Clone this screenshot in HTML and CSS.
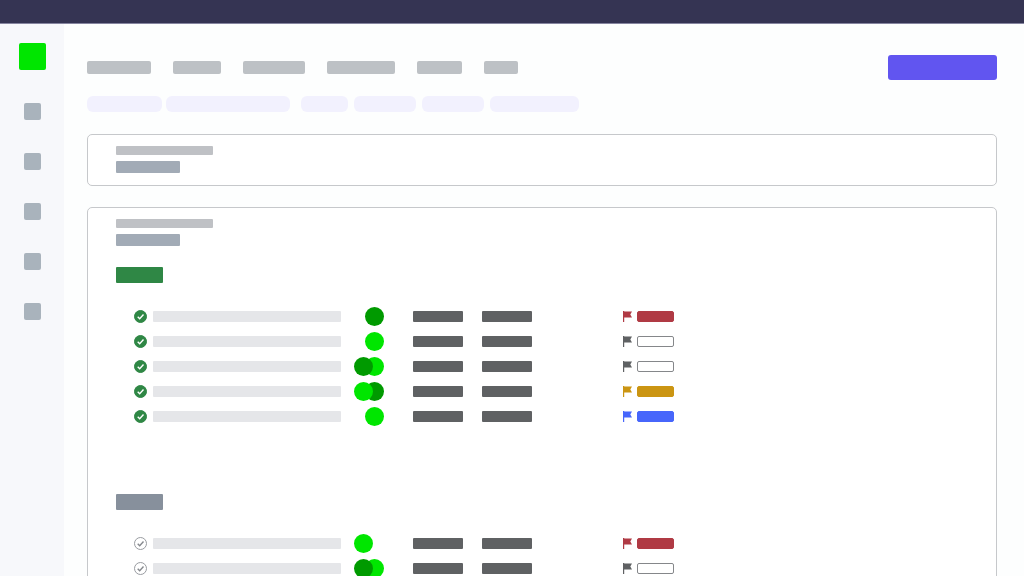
FILE: index.html
```
<!DOCTYPE html>
<html lang="en">
<head>
  <meta charset="UTF-8" />
  <meta name="viewport" content="width=device-width, initial-scale=1.0" />
  <title>Tasks</title>
  <link rel="stylesheet" href="styles.css">
</head>
<body>
  <!-- Shared icons -->
  <svg class="icon-defs" aria-hidden="true">
    <symbol id="flag" viewBox="0 0 9 11">
      <path d="M0 0h1.2v.6H9L7.3 3.5 9 6.4H1.2V11H0z" fill="currentColor" />
    </symbol>
    <symbol id="check" viewBox="0 0 13 13">
      <path d="M3.7 6.7l2 2 3.8-4.1" fill="none" stroke="currentColor" stroke-width="1.4" />
    </symbol>
  </svg>

  <header class="topbar"></header>

  <div class="layout">
    <nav class="sidebar" aria-label="Main">
      <a href="#" class="logo" aria-label="Home"></a>
      <a href="#" class="side-link" aria-label="Projects"></a>
      <a href="#" class="side-link" aria-label="Tasks"></a>
      <a href="#" class="side-link" aria-label="Calendar"></a>
      <a href="#" class="side-link" aria-label="Reports"></a>
      <a href="#" class="side-link" aria-label="Settings"></a>
    </nav>

    <main class="content">
      <div class="toolbar">
        <nav class="tabs" aria-label="Views">
          <a href="#" class="tab w-64" aria-label="Overview"></a>
          <a href="#" class="tab w-48" aria-label="List"></a>
          <a href="#" class="tab w-62" aria-label="Board"></a>
          <a href="#" class="tab w-68" aria-label="Timeline"></a>
          <a href="#" class="tab w-45" aria-label="Files"></a>
          <a href="#" class="tab w-34" aria-label="More"></a>
        </nav>
        <button type="button" class="btn-primary" aria-label="Add task"></button>
      </div>

      <div class="filters">
        <div class="filter-group tight">
          <button type="button" class="chip w-75" aria-label="Group"></button>
          <button type="button" class="chip w-124" aria-label="Subtasks"></button>
        </div>
        <div class="filter-group">
          <button type="button" class="chip w-47" aria-label="Sort"></button>
          <button type="button" class="chip w-62" aria-label="Filter"></button>
          <button type="button" class="chip w-62" aria-label="Assignee"></button>
          <button type="button" class="chip w-89" aria-label="Show closed"></button>
        </div>
      </div>

      <section class="card">
        <div class="crumb"></div>
        <div class="heading"></div>
      </section>

      <section class="card">
        <div class="crumb"></div>
        <div class="heading"></div>

        <div class="group">
          <div class="status done"></div>
          <table class="tasks">
            <tr>
              <td><label class="tick"><input type="checkbox" aria-label="Task 1" checked /><svg><use href="#check" /></svg></label></td>
              <td><div class="name"></div></td>
              <td><div class="people"><i class="dark"></i></div></td>
              <td><div class="date"></div></td>
              <td class="due"><div class="date"></div></td>
              <td><svg class="flag urgent"><use href="#flag" /></svg></td>
              <td><div class="tag urgent"></div></td>
            </tr>
            <tr>
              <td><label class="tick"><input type="checkbox" aria-label="Task 2" checked /><svg><use href="#check" /></svg></label></td>
              <td><div class="name"></div></td>
              <td><div class="people"><i></i></div></td>
              <td><div class="date"></div></td>
              <td class="due"><div class="date"></div></td>
              <td><svg class="flag"><use href="#flag" /></svg></td>
              <td><div class="tag"></div></td>
            </tr>
            <tr>
              <td><label class="tick"><input type="checkbox" aria-label="Task 3" checked /><svg><use href="#check" /></svg></label></td>
              <td><div class="name"></div></td>
              <td><div class="people"><i class="dark"></i><i></i></div></td>
              <td><div class="date"></div></td>
              <td class="due"><div class="date"></div></td>
              <td><svg class="flag"><use href="#flag" /></svg></td>
              <td><div class="tag"></div></td>
            </tr>
            <tr>
              <td><label class="tick"><input type="checkbox" aria-label="Task 4" checked /><svg><use href="#check" /></svg></label></td>
              <td><div class="name"></div></td>
              <td><div class="people"><i></i><i class="dark"></i></div></td>
              <td><div class="date"></div></td>
              <td class="due"><div class="date"></div></td>
              <td><svg class="flag high"><use href="#flag" /></svg></td>
              <td><div class="tag high"></div></td>
            </tr>
            <tr>
              <td><label class="tick"><input type="checkbox" aria-label="Task 5" checked /><svg><use href="#check" /></svg></label></td>
              <td><div class="name"></div></td>
              <td><div class="people"><i></i></div></td>
              <td><div class="date"></div></td>
              <td class="due"><div class="date"></div></td>
              <td><svg class="flag normal"><use href="#flag" /></svg></td>
              <td><div class="tag normal"></div></td>
            </tr>
          </table>
        </div>

        <div class="group">
          <div class="status"></div>
          <table class="tasks">
            <tr>
              <td><label class="tick"><input type="checkbox" aria-label="Task 6" /><svg><use href="#check" /></svg></label></td>
              <td><div class="name"></div></td>
              <td><div class="people start"><i></i></div></td>
              <td><div class="date"></div></td>
              <td class="due"><div class="date"></div></td>
              <td><svg class="flag urgent"><use href="#flag" /></svg></td>
              <td><div class="tag urgent"></div></td>
            </tr>
            <tr>
              <td><label class="tick"><input type="checkbox" aria-label="Task 7" /><svg><use href="#check" /></svg></label></td>
              <td><div class="name"></div></td>
              <td><div class="people"><i class="dark"></i><i></i></div></td>
              <td><div class="date"></div></td>
              <td class="due"><div class="date"></div></td>
              <td><svg class="flag"><use href="#flag" /></svg></td>
              <td><div class="tag"></div></td>
            </tr>
          </table>
        </div>
      </section>
    </main>
  </div>
</body>
</html>
```

FILE: styles.css
```
* {
  box-sizing: border-box;
}

body {
  margin: 0;
  height: 100vh;
  display: flex;
  flex-direction: column;
  overflow: hidden;
  background: #fdfefe;
  font-family: "Liberation Sans", Arial, sans-serif;
}

button {
  border: none;
  padding: 0;
  cursor: pointer;
}

.icon-defs {
  position: absolute;
  width: 0;
  height: 0;
}

.topbar {
  flex: none;
  height: 24px;
  background: #353453;
  border-bottom: 1px solid #8685a0;
}

.layout {
  flex: 1;
  min-height: 0;
  display: flex;
}

/* Sidebar */
.sidebar {
  flex: none;
  width: 64px;
  padding-top: 19px;
  display: flex;
  flex-direction: column;
  align-items: center;
  gap: 33px;
  background: #f7f8fb;
}

.logo {
  width: 27px;
  height: 27px;
  border-radius: 2px;
  background: #00e600;
}

.side-link {
  width: 17px;
  height: 17px;
  border-radius: 2px;
  background: #a9b3bc;
}

/* Toolbar and filters */
.content {
  flex: 1;
  min-width: 0;
  padding: 31px 27px 0 23px;
}

.toolbar {
  display: flex;
  align-items: center;
  justify-content: space-between;
}

.tabs {
  display: flex;
  gap: 22px;
}

.tab {
  height: 13px;
  border-radius: 2px;
  background: #bdc1c5;
}

.btn-primary {
  width: 109px;
  height: 25px;
  border-radius: 3px;
  background: #6155f0;
}

.filters {
  display: flex;
  gap: 11px;
  margin: 16px 0 22px;
}

.filter-group {
  display: flex;
  gap: 6px;
}

.filter-group.tight {
  gap: 4px;
}

.chip {
  height: 16px;
  border-radius: 6px;
  background: #f2f1fe;
}

.w-34 { width: 34px; }
.w-45 { width: 45px; }
.w-47 { width: 47px; }
.w-48 { width: 48px; }
.w-62 { width: 62px; }
.w-64 { width: 64px; }
.w-68 { width: 68px; }
.w-75 { width: 75px; }
.w-89 { width: 89px; }
.w-124 { width: 124px; }

/* Cards */
.card {
  margin-bottom: 21px;
  padding: 11px 28px 12px;
  border: 1px solid #c6c8cb;
  border-radius: 5px;
  background: #fff;
}

.crumb {
  width: 97px;
  height: 9px;
  margin-bottom: 6px;
  border-radius: 1px;
  background: #bfc1c5;
}

.heading {
  width: 64px;
  height: 12px;
  border-radius: 1px;
  background: #a2abb6;
}

.group {
  margin-top: 21px;
}

.group + .group {
  margin-top: 65px;
}

.status {
  width: 47px;
  height: 16px;
  margin-bottom: 21px;
  border-radius: 1px;
  background: #87909c;
}

.status.done {
  background: #2f8745;
}

/* Task rows */
.tasks {
  margin-left: 18px;
  border-collapse: collapse;
}

.tasks tr {
  height: 25px;
}

.tasks td {
  padding: 0;
  vertical-align: middle;
}

.tick {
  display: grid;
  width: 13px;
  height: 13px;
  margin-right: 6px;
}

.tick input,
.tick svg {
  grid-area: 1 / 1;
  width: 13px;
  height: 13px;
  margin: 0;
}

.tick input {
  appearance: none;
  border: 1px solid #999ca1;
  border-radius: 50%;
}

.tick svg {
  color: #85888d;
  pointer-events: none;
}

.tick input:checked {
  border-color: #2f8745;
  background: #2f8745;
}

.tick input:checked + svg {
  color: #fff;
}

.name {
  width: 188px;
  height: 11px;
  margin-right: 13px;
  border-radius: 1px;
  background: #e5e6e9;
}

.people {
  display: flex;
  flex-direction: row;
  justify-content: flex-end;
  width: 30px;
  margin-right: 29px;
}

.people.start {
  justify-content: flex-start;
}

.people i {
  width: 19px;
  height: 19px;
  border-radius: 50%;
  background: #00e600;
}

/* first avatar sits over the second */
.people i:first-child {
  z-index: 1;
}

.people i + i {
  margin-left: -8px;
}

.people .dark {
  background: #009a00;
}

.date {
  width: 50px;
  height: 11px;
  margin-right: 19px;
  border-radius: 1px;
  background: #5f6163;
}

.due .date {
  margin-right: 91px;
}

.flag {
  display: block;
  width: 9px;
  height: 11px;
  margin-right: 5px;
  color: #5f6163;
}

.flag.urgent { color: #b03a44; }
.flag.high { color: #cb9512; }
.flag.normal { color: #4766fb; }

.tag {
  width: 37px;
  height: 11px;
  border: 1px solid #85878a;
  border-radius: 2px;
  background: #fff;
}

.tag.urgent {
  border-color: #b03a44;
  background: #b03a44;
}

.tag.high {
  border-color: #cb9512;
  background: #cb9512;
}

.tag.normal {
  border-color: #4766fb;
  background: #4766fb;
}
```
